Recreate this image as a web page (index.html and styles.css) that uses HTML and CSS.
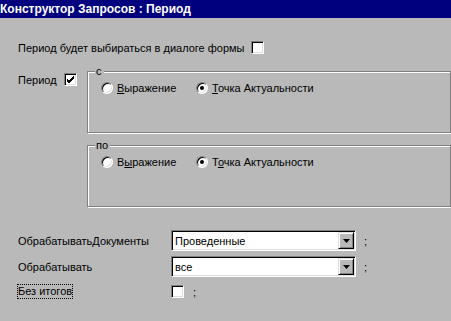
FILE: index.html
```html
<!DOCTYPE html>
<html>
<head>
<meta charset="utf-8">
<link rel="stylesheet" href="styles.css">
</head>
<body>
<div class="title">Конструктор Запросов : Период</div>
<div class="form">
  <div class="row1">
    <span class="row1-label">Период будет выбираться в диалоге формы</span>
    <span class="check"></span>
  </div>
  <div class="period">
    <div class="period-left">
      <span class="period-label">Период</span>
      <span class="check checked"><svg width="9" height="9" viewBox="0 0 9 9"><path d="M1 4 L3 6 L8 1 M1 5 L3 7 L8 2 M1 6 L3 8 L8 3" stroke="#000" stroke-width="1" fill="none"/></svg></span>
    </div>
    <div class="frames">
      <div class="frame">
        <span class="legend">с</span>
        <div class="radios">
          <div class="ritem"><span class="radio"></span><span class="rtext"><u>В</u>ыражение</span></div>
          <div class="ritem"><span class="radio on"></span><span class="rtext"><u>Т</u>очка Актуальности</span></div>
        </div>
      </div>
      <div class="frame frame2">
        <span class="legend">по</span>
        <div class="radios">
          <div class="ritem"><span class="radio"></span><span class="rtext">В<u>ы</u>ражение</span></div>
          <div class="ritem"><span class="radio on"></span><span class="rtext">Т<u>о</u>чка Актуальности</span></div>
        </div>
      </div>
    </div>
  </div>
  <div class="rows">
    <div class="frow">
      <span class="flabel">ОбрабатыватьДокументы</span>
      <div class="combo"><span class="ctext">Проведенные</span><span class="cbtn"><svg width="7" height="4" viewBox="0 0 7 4"><path d="M0 0 H7 L3.5 4 Z" fill="#000"/></svg></span></div>
      <span class="semi">;</span>
    </div>
    <div class="frow">
      <span class="flabel">Обрабатывать</span>
      <div class="combo"><span class="ctext">все</span><span class="cbtn"><svg width="7" height="4" viewBox="0 0 7 4"><path d="M0 0 H7 L3.5 4 Z" fill="#000"/></svg></span></div>
      <span class="semi">;</span>
    </div>
    <div class="frow frow3">
      <span class="flabel"><span class="focus">Без итогов</span></span>
      <span class="check"></span>
      <span class="semi semi3">;</span>
    </div>
  </div>
</div>
</body>
</html>
```
FILE: styles.css
```css
html, body {
  margin: 0;
  padding: 0;
  width: 451px;
  height: 321px;
  overflow: hidden;
  background: #b9b9b9;
  font-family: "Liberation Sans", Arial, sans-serif;
  font-size: 11px;
  color: #000;
}
.title {
  height: 18px;
  line-height: 18px;
  background: #00007f;
  color: #fff;
  font-weight: bold;
  font-size: 12px;
  white-space: nowrap;
}
.form {
  padding-left: 18px;
}
.row1 {
  margin-top: 23px;
  height: 13px;
  display: flex;
  align-items: center;
}
.row1-label {
  width: 233px;
  flex: none;
  white-space: nowrap;
  overflow: hidden;
}
.check {
  box-sizing: border-box;
  width: 13px;
  height: 13px;
  background: #fff;
  border: 1px solid;
  border-color: #808080 #fff #fff #808080;
  box-shadow: inset 1px 1px 0 #000, inset -1px -1px 0 #dfdfdf;
  display: flex;
  align-items: center;
  justify-content: center;
  flex: none;
}
.check svg { display: block; }
.period {
  margin-top: 17px;
  display: flex;
}
.period-left {
  display: flex;
  align-items: center;
  height: 13px;
  margin-top: 2px;
}
.period-label {
  width: 46px;
}
.frames {
  margin-left: 10px;
  width: 400px;
}
.frame {
  position: relative;
  box-sizing: border-box;
  height: 62px;
  border: 1px solid #808080;
  box-shadow: inset 1px 1px 0 #fff, 1px 1px 0 #fff;
  padding: 10px 0 0 13px;
}
.frame2 {
  margin-top: 12px;
}
.legend {
  position: absolute;
  top: -7px;
  left: 7px;
  padding: 0 2px 0 1px;
  background: #b9b9b9;
  line-height: 12px;
}
.radios {
  display: flex;
  align-items: center;
  height: 12px;
}
.ritem {
  display: flex;
  align-items: center;
  width: 95px;
  flex: none;
}
.ritem:last-child { width: auto; }
.radio {
  box-sizing: border-box;
  position: relative;
  width: 12px;
  height: 12px;
  border-radius: 50%;
  background: #fff;
  border: 1px solid;
  border-color: #808080 #fff #fff #808080;
  box-shadow: inset 1px 1px 0 #000, inset -1px -1px 0 #dfdfdf;
  flex: none;
}
.radio.on::after {
  content: "";
  position: absolute;
  left: 3px;
  top: 3px;
  width: 4px;
  height: 4px;
  border-radius: 50%;
  background: #000;
}
.rtext {
  margin-left: 4px;
  white-space: nowrap;
}
u { text-decoration-thickness: 1px; text-underline-offset: 1px; }
.rows {
  margin-top: 23px;
}
.frow {
  display: flex;
  align-items: center;
  height: 21px;
}
.frow + .frow { margin-top: 5px; }
.frow3 {
  margin-top: 7px !important;
  height: 15px;
}
.flabel {
  width: 153px;
  white-space: nowrap;
  flex: none;
}
.focus {
  border: 1px dotted #000;
  margin-left: -1px;
  line-height: 13px;
  display: inline-block;
}
.combo {
  box-sizing: border-box;
  width: 185px;
  height: 21px;
  background: #fff;
  border: 1px solid;
  border-color: #808080 #fff #fff #808080;
  box-shadow: inset 1px 1px 0 #000, inset -1px -1px 0 #dfdfdf;
  padding: 1px 1px 1px 2px;
  display: flex;
  align-items: center;
  flex: none;
}
.ctext {
  flex: 1;
  padding-left: 1px;
  white-space: nowrap;
}
.cbtn {
  box-sizing: border-box;
  width: 16px;
  height: 17px;
  background: #b9b9b9;
  border: 1px solid;
  border-color: #dfdfdf #000 #000 #dfdfdf;
  box-shadow: inset 1px 1px 0 #fff, inset -1px -1px 0 #808080;
  display: flex;
  align-items: center;
  justify-content: center;
}
.cbtn svg { display: block; }
.semi {
  margin-left: 8px;
}
.semi3 {
  margin-left: 9px;
}
```
